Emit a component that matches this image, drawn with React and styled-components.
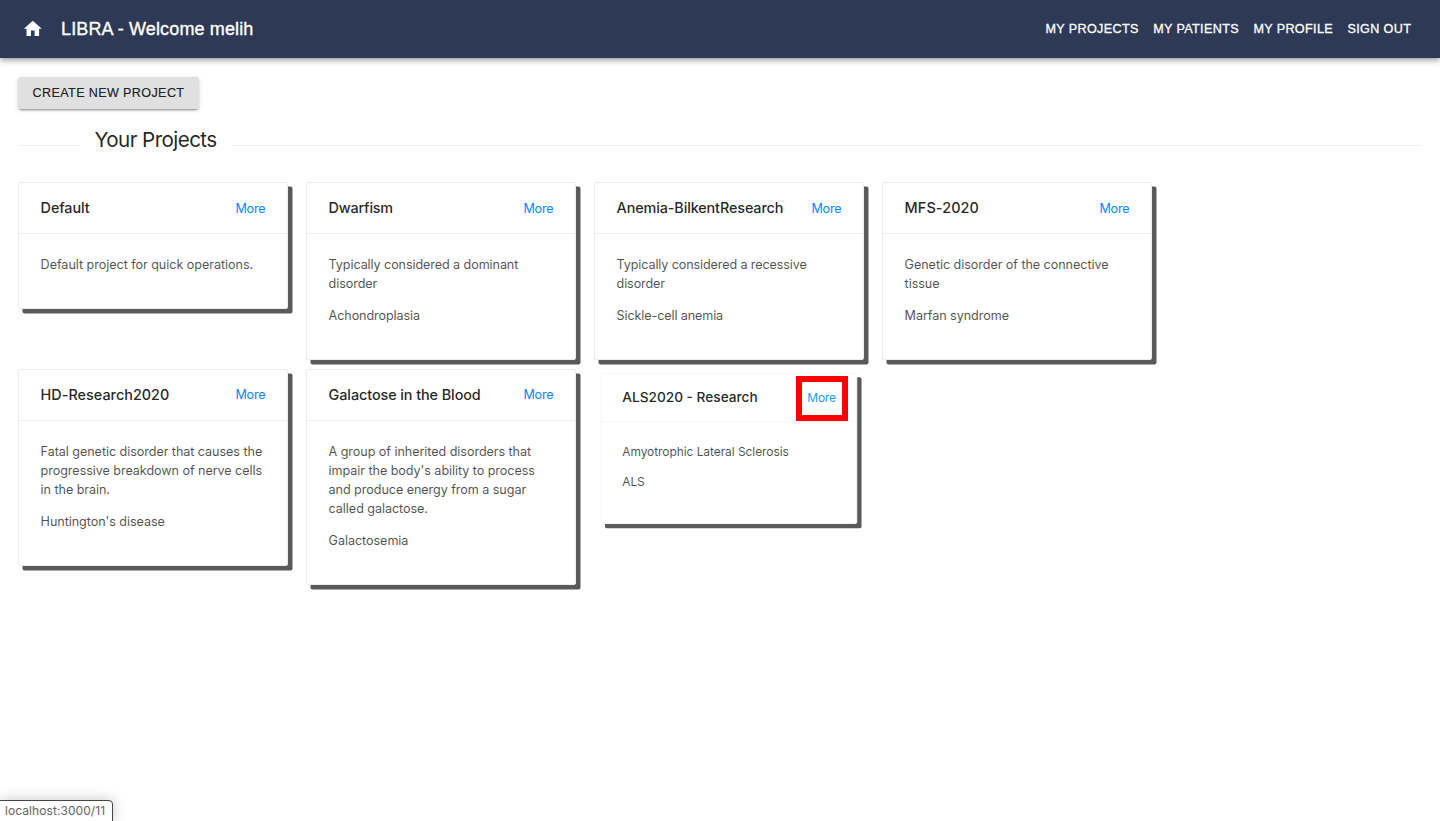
import React from "react";
import styled, { createGlobalStyle } from "styled-components";
import { MdHome } from "react-icons/md";

const GlobalStyle = createGlobalStyle`
  * { box-sizing: border-box; }
  body {
    margin: 0;
    background: #fff;
    overflow: hidden;
    font-family: Inter, "Liberation Sans", sans-serif;
    -webkit-font-smoothing: antialiased;
  }
`;

const Page = styled.div`
  position: relative;
  height: 821px;
  overflow: hidden;
`;

const AppBar = styled.header`
  display: flex;
  align-items: center;
  height: 58px;
  padding: 0 28.8px 0 21.6px;
  color: #fff;
  background: #2e3955;
  font-family: "Liberation Sans", Arial, sans-serif;
  box-shadow: 0 2px 4px -1px rgba(0, 0, 0, 0.2), 0 4px 5px 0 rgba(0, 0, 0, 0.14),
    0 1px 9px 0 rgba(0, 0, 0, 0.12);
`;

const HomeIcon = styled(MdHome)`
  width: 21.6px;
  height: 21.6px;
  margin-right: 17.8px;
`;

const AppTitle = styled.h1`
  margin: 0;
  flex: 1;
  font-size: 18px;
  font-weight: 400;
  line-height: 28px;
  letter-spacing: 0.13px;
  -webkit-text-stroke: 0.35px #fff;
`;

const Nav = styled.nav`
  display: flex;
  gap: 14.4px;
`;

const NavLink = styled.a`
  font-size: 12.6px;
  line-height: 22px;
  letter-spacing: 0.36px;
  text-transform: uppercase;
  -webkit-text-stroke: 0.3px #fff;
`;

const Content = styled.main`
  padding: 19.2px 18px 0;
`;

const CreateButton = styled.button`
  display: block;
  width: 181px;
  height: 32px;
  padding: 0 0 1px;
  border: 0;
  border-radius: 3.6px;
  background: #e0e0e0;
  color: rgba(0, 0, 0, 0.87);
  font: 400 12.6px "Liberation Sans", Arial, sans-serif;
  letter-spacing: 0.36px;
  white-space: nowrap;
  -webkit-text-stroke: 0.2px rgba(0, 0, 0, 0.87);
  box-shadow: 0 3px 1px -2px rgba(0, 0, 0, 0.2), 0 2px 2px 0 rgba(0, 0, 0, 0.14),
    0 1px 5px 0 rgba(0, 0, 0, 0.12);
`;

const SectionHeading = styled.div`
  display: flex;
  align-items: center;
  height: 36px;
  margin-top: 18.8px;
`;

const Rule = styled.span`
  width: ${(p) => p.$width || "auto"};
  flex: ${(p) => (p.$width ? "none" : 1)};
  height: 1px;
  background: #f0f0f0;
`;

const SectionTitle = styled.h2`
  margin: -12px 15.6px 0 14.4px;
  width: 122px;
  font-size: 20.6px;
  font-weight: 400;
  line-height: 32px;
  letter-spacing: -0.56px;
  white-space: nowrap;
  color: rgba(0, 0, 0, 0.87);
`;

const CardGrid = styled.section`
  display: grid;
  grid-template-columns: repeat(4, 270px);
  column-gap: 18px;
  row-gap: 9px;
  align-items: start;
  margin-top: 18px;
`;

const Card = styled.article`
  position: relative;
  border: 1px solid ${(p) => (p.$pressed ? "#f4f4f4" : "#ececec")};
  border-radius: 2px;
  background: #fff;
  box-shadow: 4.5px 4.5px 0 #5a5a5a;
  transform: ${(p) => (p.$pressed ? "scale(0.95)" : "none")};
`;

const CardHeader = styled.header`
  display: flex;
  align-items: center;
  justify-content: space-between;
  height: 51px;
  padding: 0 21.6px;
  border-bottom: 1px solid ${(p) => (p.$pressed ? "#f4f4f4" : "#ececec")};
`;

const CardTitle = styled.h3`
  margin: 0;
  font-size: 14.4px;
  font-weight: 500;
  line-height: 22px;
  letter-spacing: ${(p) => p.$tracking || 0}px;
  white-space: nowrap;
  color: rgba(0, 0, 0, 0.87);
`;

const MoreLink = styled.a`
  margin-top: 0.2px;
  font-size: 12.6px;
  line-height: 19px;
  letter-spacing: -0.2px;
  color: ${(p) => (p.$pressed ? "#2699fb" : "#0a84ff")};
`;

const CardBody = styled.div`
  padding: 21.4px 20px 20.8px 21.6px;
`;

const Text = styled.p`
  margin: 0 0 12.8px;
  font-size: 12.6px;
  line-height: 19px;
  letter-spacing: ${(p) => p.$tracking || -0.06}px;
  color: rgba(0, 0, 0, 0.7);
`;

const Highlight = styled.div`
  position: absolute;
  left: 796px;
  top: 376px;
  width: 52px;
  height: 45px;
  border: 6px solid #ff0000;
`;

const StatusBar = styled.div`
  position: absolute;
  left: -1px;
  bottom: -1px;
  height: 22px;
  width: 114px;
  padding-left: 5px;
  border: 1px solid #454545;
  border-radius: 0 4px 0 0;
  background: #fff;
  font-size: 12px;
  line-height: 20px;
  letter-spacing: 0.07px;
  white-space: nowrap;
  color: #636363;
  box-shadow: 0 0 14px rgba(0, 0, 0, 0.22);
`;

const projects = [
  { title: "Default", tracking: -0.1, textTracking: -0.045, text: ["Default project for quick operations."] },
  { title: "Dwarfism", tracking: -0.2, textTracking: -0.09, text: [<>Typically considered a dominant<br />disorder</>, "Achondroplasia"] },
  { title: "Anemia-BilkentResearch", tracking: -0.12, textTracking: -0.12, text: [<>Typically considered a recessive<br />disorder</>, "Sickle-cell anemia"] },
  { title: "MFS-2020", tracking: 0.12, text: [<>Genetic disorder of the connective<br />tissue</>, "Marfan syndrome"] },
  {
    title: "HD-Research2020",
    tracking: 0.02,
    text: [
      <>Fatal genetic disorder that causes the<br />progressive breakdown of nerve cells<br />in the brain.</>,
      "Huntington's disease",
    ],
  },
  {
    title: "Galactose in the Blood",
    tracking: -0.08,
    text: [
      <>A group of inherited disorders that<br />impair the body's ability to process<br />and produce energy from a sugar<br />called galactose.</>,
      "Galactosemia",
    ],
  },
  { title: "ALS2020 - Research", text: ["Amyotrophic Lateral Sclerosis", "ALS"], pressed: true },
];

export default function App() {
  return (
    <Page>
      <GlobalStyle />
      <AppBar>
        <HomeIcon />
        <AppTitle>LIBRA - Welcome melih</AppTitle>
        <Nav>
          <NavLink>My Projects</NavLink>
          <NavLink>My Patients</NavLink>
          <NavLink>My Profile</NavLink>
          <NavLink>Sign Out</NavLink>
        </Nav>
      </AppBar>
      <Content>
        <CreateButton>CREATE NEW PROJECT</CreateButton>
        <SectionHeading>
          <Rule $width="62px" />
          <SectionTitle>Your Projects</SectionTitle>
          <Rule />
        </SectionHeading>
        <CardGrid>
          {projects.map((project) => (
            <Card key={project.title} $pressed={project.pressed}>
              <CardHeader $pressed={project.pressed}>
                <CardTitle $tracking={project.tracking}>{project.title}</CardTitle>
                <MoreLink $pressed={project.pressed}>More</MoreLink>
              </CardHeader>
              <CardBody>
                {project.text.map((paragraph, i) => (
                  <Text key={i} $tracking={project.textTracking}>{paragraph}</Text>
                ))}
              </CardBody>
            </Card>
          ))}
        </CardGrid>
      </Content>
      <Highlight />
      <StatusBar>localhost:3000/11</StatusBar>
    </Page>
  );
}
